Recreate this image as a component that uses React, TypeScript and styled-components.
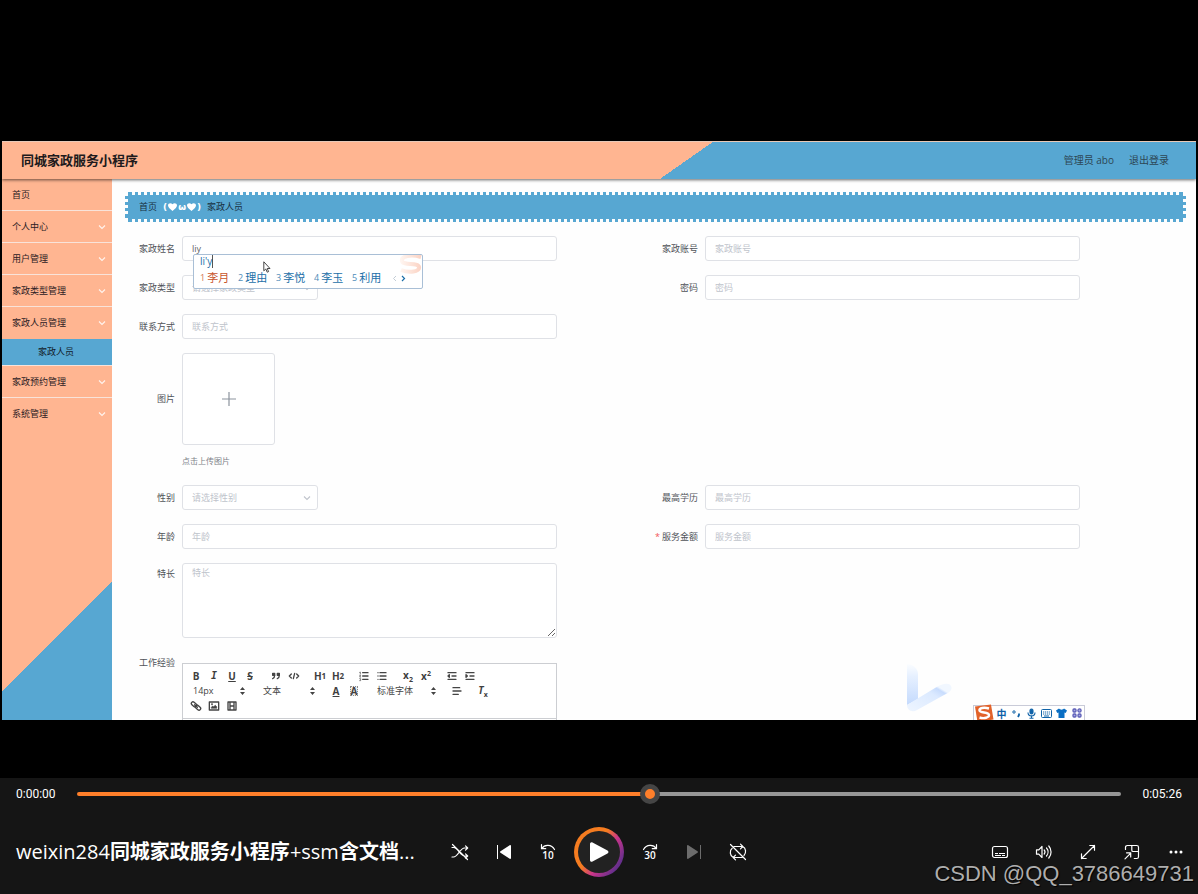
import React from "react";
import styled, { createGlobalStyle, css } from "styled-components";

const PEACH = "#ffb591";
const BLUE = "#57a7d2";
const BORDER = "#dfe1e6";
const MUTED = "#c0c4cc";

const GlobalStyle = createGlobalStyle`
  *, *::before, *::after { box-sizing: border-box; }
  body { margin: 0; background: #000; }
  body, button, input, select, textarea {
    font-family: "Open Sans", "Noto Sans CJK SC", sans-serif;
  }
  button { padding: 0; border: 0; background: none; color: inherit; cursor: pointer; }
  svg { display: block; flex: none; }
`;

/* ---------- window ---------- */

const Window = styled.div`
  position: relative;
  display: flex;
  flex-direction: column;
  height: 100vh;
  min-height: 600px;
  overflow: hidden;
  background: #000;
`;

const Stage = styled.div`
  flex: 1;
  min-height: 0;
  display: flex;
  padding: 141px 2px 58px;
`;

const Video = styled.div`
  position: relative;
  flex: 1;
  min-width: 0;
  display: flex;
  flex-direction: column;
  overflow: hidden;
  background: #fefefe;
`;

/* ---------- admin site ---------- */

const SiteHeader = styled.header`
  position: relative;
  flex: none;
  display: flex;
  align-items: center;
  justify-content: space-between;
  height: 38px;
  padding: 0 27px 2px 19px;
  border-top: 1px solid #e8c9b8;
  background: linear-gradient(145deg, ${PEACH} 57%, ${BLUE} 57%);
  box-shadow: 0 1px 3px rgba(0, 0, 0, 0.6);
`;

const SiteTitle = styled.h1`
  margin: 0;
  font-size: 13px;
  line-height: 20px;
  font-weight: 700;
  color: #201a1c;
`;

const UserNav = styled.nav`
  display: flex;
  gap: 15px;
  font-size: 10px;
  line-height: 16px;
  color: #2d4654;
`;

const NavLink = styled.a`
  color: inherit;
  text-decoration: none;
`;

const Body = styled.div`
  flex: 1;
  min-height: 0;
  display: flex;
`;

const Sidebar = styled.nav`
  flex: none;
  width: 110px;
  background: linear-gradient(135deg, ${PEACH} calc(100% - 98px), ${BLUE} calc(100% - 98px));
`;

const MenuItem = styled.a<{ $line?: boolean }>`
  display: flex;
  align-items: center;
  justify-content: space-between;
  height: 32px;
  padding: 0 6px 0 10px;
  border-bottom: 1px solid ${(p) => (p.$line ? "#f8e3da" : "transparent")};
  font-size: 9px;
  color: #2b2024;
  text-decoration: none;
`;

const SubItem = styled.a`
  display: flex;
  align-items: center;
  justify-content: center;
  height: 27px;
  padding: 0 2px 1px 0;
  border-bottom: 1px solid #f8e3da;
  background: ${BLUE};
  font-size: 9px;
  color: #12202a;
  text-decoration: none;
`;

const Main = styled.main`
  flex: 1;
  min-width: 0;
  padding: 13px 10px 0 13px;
`;

const Breadcrumb = styled.div`
  display: flex;
  align-items: center;
  gap: 6px;
  height: 30px;
  padding: 0 11px 1px;
  border: 3px dotted #fefefe;
  border-radius: 3px;
  background: ${BLUE};
  font-size: 9px;
  color: #17303f;
`;

const Face = styled.span`
  display: flex;
  align-items: center;
  gap: 1px;
  font-family: "DejaVu Sans", sans-serif;
  font-size: 9px;
  font-weight: 700;
  color: #fff;
`;

const Form = styled.form`
  display: flex;
  flex-direction: column;
  gap: 14px;
  padding: 14px 15px 0 0;
`;

const FormRow = styled.div`
  display: grid;
  grid-template-columns: 1fr 1fr;
`;

const Field = styled.div`
  display: flex;
  gap: 7px;
  padding-right: 91px;
`;

const labelCss = css<{ $height?: number }>`
  flex: none;
  width: 50px;
  font-size: 9px;
  line-height: ${(p) => p.$height ?? 25}px;
  height: ${(p) => p.$height ?? 25}px;
  text-align: right;
  white-space: nowrap;
  color: #505359;
`;

const Label = styled.label<{ $height?: number }>`
  ${labelCss}
`;

const LabelText = styled.span<{ $height?: number }>`
  ${labelCss}
`;

const Star = styled.span`
  margin-right: 2px;
  color: #f25555;
`;

const Control = styled.div`
  position: relative;
  flex: 1;
  min-width: 0;
`;

const boxCss = css`
  display: block;
  border: 1px solid ${BORDER};
  border-radius: 3px;
  background: #fff;
  font-size: 9px;
  color: #606266;
  outline: none;
  &::placeholder { color: ${MUTED}; opacity: 1; }
`;

const TextInput = styled.input`
  ${boxCss}
  width: 100%;
  height: 25px;
  padding: 0 9px;
`;

const TextArea = styled.textarea`
  ${boxCss}
  width: 100%;
  height: 75px;
  padding: 2px 9px;
  line-height: 14px;
  resize: vertical;
`;

const SelectWrap = styled.div`
  display: grid;
  grid-template-columns: 136px;
  align-items: center;
  justify-items: end;
  & > * { grid-area: 1 / 1; }
  & > svg { margin-right: 7px; pointer-events: none; }
`;

const SelectBox = styled.select`
  ${boxCss}
  appearance: none;
  width: 100%;
  height: 25px;
  padding: 0 9px;
  color: ${MUTED};
`;

const Upload = styled.button`
  display: flex;
  align-items: center;
  justify-content: center;
  width: 93px;
  height: 92px;
  border: 1px solid ${BORDER};
  border-radius: 3px;
  background: #fff;
`;

const Tip = styled.div`
  margin-top: 5px;
  font-size: 8px;
  line-height: 21px;
  color: #7d8188;
`;

/* ---------- rich text editor ---------- */

const Editor = styled.div`
  margin-top: 11px;
  border: 1px solid #ccced2;
  background: #fff;
`;

const EditorTools = styled.div`
  padding: 4px 4px 5px;
  border-bottom: 1px solid #ccced2;
`;

const ToolRow = styled.div`
  display: flex;
  align-items: center;
  gap: 8px;
  height: 15px;
`;

const ToolGroup = styled.div`
  display: flex;
`;

const Tool = styled.button<{ $italic?: boolean; $line?: "under" | "through"; $boxed?: boolean }>`
  display: flex;
  align-items: center;
  justify-content: center;
  width: 18px;
  height: 15px;
  font-size: 10px;
  line-height: 14px;
  font-weight: 700;
  color: #3f3f3f;
  font-style: ${(p) => (p.$italic ? "italic" : "normal")};
  font-family: ${(p) => (p.$italic ? '"DejaVu Sans Mono", monospace' : '"Open Sans", sans-serif')};
  text-decoration: ${(p) =>
    p.$line === "under" ? "underline" : p.$line === "through" ? "line-through" : "none"};
  & sub, & sup { font-size: 7px; line-height: 6px; }
  & small { font-size: 8px; }
  ${(p) =>
    p.$boxed &&
    css`
      & > span { padding: 0 1px; outline: 1px dotted #8a8a8a; outline-offset: -1px; line-height: 10px; background: #eee; }
    `}
`;

const Picker = styled.div<{ $width: number }>`
  display: grid;
  grid-template-columns: ${(p) => p.$width}px;
  align-items: center;
  justify-items: end;
  & > * { grid-area: 1 / 1; }
  & > svg { margin-right: 4px; pointer-events: none; }
`;

const PickerSelect = styled.select`
  appearance: none;
  width: 100%;
  height: 15px;
  padding: 0 6px;
  border: 0;
  background: none;
  font-size: 9px;
  color: #444;
`;

const EditorArea = styled.div`
  height: 120px;
`;

/* ---------- things that float over the page ---------- */

const Ime = styled.div`
  position: absolute;
  z-index: 2;
  top: 18px;
  left: 11px;
  width: 230px;
  height: 35px;
  padding: 0 6px;
  overflow: hidden;
  border: 1px solid #a9bfd6;
  border-radius: 2px;
  background: #fff;
  color: #1c6fa8;
`;

const ImeLogo = styled.svg`
  position: absolute;
  top: 0;
  right: 0;
`;

const Typed = styled.div`
  font-size: 10px;
  line-height: 13px;
`;

const Caret = styled.span`
  border-right: 1px solid #555;
`;

const Candidates = styled.div`
  display: grid;
  grid-template-columns: repeat(5, 38px) 1fr;
  align-items: center;
  font-size: 11px;
  line-height: 20px;
`;

const Candidate = styled.span<{ $first?: boolean }>`
  display: flex;
  align-items: center;
  gap: 2px;
  white-space: nowrap;
  color: ${(p) => (p.$first ? "#c8542c" : "#1c6fa8")};
`;

const Num = styled.span`
  font-size: 9px;
  opacity: 0.8;
`;

const Pager = styled.span`
  display: flex;
  gap: 4px;
  padding-left: 2px;
`;

const Pointer = styled.svg`
  position: absolute;
  z-index: 3;
  top: 25px;
  left: 81px;
`;

const Bird = styled.svg`
  position: absolute;
  right: 244px;
  bottom: 8px;
`;

const ImeBar = styled.div`
  position: absolute;
  right: 111px;
  bottom: 0;
  display: flex;
  align-items: center;
  height: 15px;
  border: 1px solid #c9cbd8;
  border-bottom: 0;
  background: #fff;
  font-size: 10px;
  font-weight: 700;
  color: #0f62a8;
`;

const ImeCell = styled.span`
  display: flex;
  align-items: center;
  justify-content: center;
  width: 15px;
  height: 14px;
`;

/* ---------- player ---------- */

const Player = styled.footer`
  flex: none;
  background: #151515;
  color: #fff;
`;

const SeekRow = styled.div`
  display: grid;
  grid-template-columns: 45px 1fr 45px;
  align-items: center;
  column-gap: 16px;
  height: 32px;
  padding: 0 16px;
  font-family: Roboto, sans-serif;
  font-size: 12px;
  line-height: 16px;
`;

const Time = styled.span<{ $end?: boolean }>`
  text-align: ${(p) => (p.$end ? "right" : "left")};
`;

const Seek = styled.input`
  appearance: none;
  width: 100%;
  height: 20px;
  margin: 0;
  background: none;
  &::-webkit-slider-runnable-track {
    height: 4px;
    border-radius: 2px;
    background: linear-gradient(to right, #ff7f2a 55%, #969696 55%);
  }
  &::-webkit-slider-thumb {
    appearance: none;
    width: 20px;
    height: 20px;
    margin-top: -8px;
    border: 5px solid #454545;
    border-radius: 50%;
    background: #ff7f2a;
  }
`;

const ControlsRow = styled.div`
  display: grid;
  grid-template-columns: minmax(0, 1fr) auto minmax(0, 1fr);
  align-items: center;
  height: 84px;
`;

const MediaTitle = styled.div`
  padding-left: 16px;
  overflow: hidden;
  font-size: 20px;
  line-height: 28px;
  font-weight: 500;
  white-space: nowrap;
`;

const Han = styled.span`
  font-weight: 700;
`;

const Buttons = styled.div<{ $end?: boolean }>`
  display: flex;
  align-items: center;
  justify-content: ${(p) => (p.$end ? "flex-end" : "center")};
`;

const IconButton = styled.button`
  display: flex;
  align-items: center;
  justify-content: center;
  width: 44px;
  height: 44px;
  color: #fff;
  &:disabled { color: #6c6c6c; }
`;

const PlayButton = styled.button`
  display: flex;
  align-items: center;
  justify-content: center;
  width: 50px;
  height: 50px;
  margin: 0 4px;
  border: 4px solid transparent;
  border-radius: 50%;
  background:
    linear-gradient(#222, #222) padding-box,
    linear-gradient(125deg, #f57c20 42%, #c9358a 60%, #662f8c 84%) border-box;
`;

const Watermark = styled.div`
  position: absolute;
  right: 4px;
  bottom: 7px;
  font-family: "Liberation Sans", sans-serif;
  font-size: 22px;
  line-height: 26px;
  color: #aeaeae;
  text-shadow: 1px 1px 1px #000;
  pointer-events: none;
`;

/* ---------- small drawings ---------- */

const Chevron = ({ color = MUTED }: { color?: string }) => (
  <svg width="8" height="6" viewBox="0 0 8 6" fill="none" stroke={color} strokeWidth="1.100">
    <path d="M1 1.5l3 3 3-3" />
  </svg>
);

const Heart = () => (
  <svg width="9" height="8" viewBox="0 0 9 8" fill="#fff">
    <path d="M4.500 8C1.500 5.500 0 4.200 0 2.300 0 .2 3 -.8 4.500 1.300 6 -.8 9 .2 9 2.300 9 4.200 7.500 5.500 4.500 8z" />
  </svg>
);

const UpDown = () => (
  <svg width="5" height="8" viewBox="0 0 5 8" fill="#444">
    <path d="M2.500 0L5 3H0zM2.500 8L0 5h5z" />
  </svg>
);

const Glyph = ({ children }: { children: React.ReactNode }) => (
  <svg width="12" height="12" viewBox="0 0 18 18" fill="none" stroke="#444" strokeWidth="2" strokeLinecap="round" strokeLinejoin="round">
    {children}
  </svg>
);

const Line16 = ({ children }: { children: React.ReactNode }) => (
  <svg width="18" height="18" viewBox="0 0 18 18" fill="none" stroke="currentColor" strokeWidth="1.2" strokeLinecap="round" strokeLinejoin="round">
    {children}
  </svg>
);

/* ---------- parts ---------- */

type TextFieldProps = { id: string; label: string; required?: boolean; value?: string; children?: React.ReactNode };

const TextField = ({ id, label, required, value, children }: TextFieldProps) => (
  <Field>
    <Label htmlFor={id}>
      {required && <Star>*</Star>}
      {label}
    </Label>
    <Control>
      <TextInput id={id} placeholder={label} defaultValue={value} />
      {children}
    </Control>
  </Field>
);

const SelectField = ({ id, label }: { id: string; label: string }) => (
  <Field>
    <Label htmlFor={id}>{label}</Label>
    <Control>
      <SelectWrap>
        <SelectBox id={id}>
          <option>{`请选择${label}`}</option>
        </SelectBox>
        <Chevron />
      </SelectWrap>
    </Control>
  </Field>
);

const words = ["李月", "理由", "李悦", "李玉", "利用"];

const ImePopup = () => (
  <Ime>
    <ImeLogo width="24" height="20" viewBox="0 0 24 20" fill="none" strokeWidth="4">
      <defs>
        <linearGradient id="fade" x1="0" y1="0" x2="1" y2="0">
          <stop offset="0" stopColor="#fff5f0" />
          <stop offset="1" stopColor="#fbd3c4" />
        </linearGradient>
      </defs>
      <path d="M23 2C13-1 3 1 4 6s16 1 17 6-10 6-18 3" stroke="url(#fade)" />
    </ImeLogo>
    <Typed>
      <Caret>li'y</Caret>
    </Typed>
    <Candidates>
      {words.map((w, i) => (
        <Candidate key={w} $first={i === 0}>
          <Num>{i + 1}</Num>
          {w}
        </Candidate>
      ))}
      <Pager>
        <svg width="5" height="7" viewBox="0 0 5 7" fill="none" stroke="#c3cdd6" strokeWidth="1">
          <path d="M4 1L1.500 3.500 4 6" />
        </svg>
        <svg width="5" height="7" viewBox="0 0 5 7" fill="none" stroke="#1c6fa8" strokeWidth="1.200">
          <path d="M1 1l2.500 2.500L1 6" />
        </svg>
      </Pager>
    </Candidates>
  </Ime>
);

const RichEditor = () => (
  <Editor>
    <EditorTools>
      <ToolRow>
        <ToolGroup>
          <Tool type="button">B</Tool>
          <Tool type="button" $italic>I</Tool>
          <Tool type="button" $line="under">U</Tool>
          <Tool type="button" $line="through">S</Tool>
        </ToolGroup>
        <ToolGroup>
          <Tool type="button" aria-label="引用">
            <Glyph>
              <rect x="4" y="5" width="3" height="3" fill="#444" />
              <rect x="11" y="5" width="3" height="3" fill="#444" />
              <path d="M7 8c0 4-3 5-3 5M14 8c0 4-3 5-3 5" />
            </Glyph>
          </Tool>
          <Tool type="button" aria-label="代码">
            <Glyph><path d="M5 6L2 9l3 3M13 6l3 3-3 3M10 5L8 13" /></Glyph>
          </Tool>
        </ToolGroup>
        <ToolGroup>
          <Tool type="button">H<small>1</small></Tool>
          <Tool type="button">H<small>2</small></Tool>
        </ToolGroup>
        <ToolGroup>
          <Tool type="button" aria-label="有序列表">
            <Glyph>
              <path d="M7 4h8M7 9h8M7 14h8" />
              <path d="M2.500 3.500l1-.5v3M2.500 8h1.500l-1.500 2.500h1.500M2.500 13h1.500v3h-1.500" strokeWidth="1" />
            </Glyph>
          </Tool>
          <Tool type="button" aria-label="无序列表">
            <Glyph><path d="M6 4h9M6 9h9M6 14h9M3 4h0M3 9h0M3 14h0" /></Glyph>
          </Tool>
        </ToolGroup>
        <ToolGroup>
          <Tool type="button"><span>x<sub>2</sub></span></Tool>
          <Tool type="button"><span>x<sup>2</sup></span></Tool>
        </ToolGroup>
        <ToolGroup>
          <Tool type="button" aria-label="减少缩进">
            <Glyph><path d="M3 4h12M3 14h12M9 9h6" /><path d="M5 7v4L3 9z" fill="#444" /></Glyph>
          </Tool>
          <Tool type="button" aria-label="增加缩进">
            <Glyph><path d="M3 4h12M3 14h12M9 9h6" /><path d="M3 7v4l2-2z" fill="#444" /></Glyph>
          </Tool>
        </ToolGroup>
      </ToolRow>
      <ToolRow>
        <Picker $width={62}>
          <PickerSelect aria-label="字号"><option>14px</option></PickerSelect>
          <UpDown />
        </Picker>
        <Picker $width={62}>
          <PickerSelect aria-label="段落"><option>文本</option></PickerSelect>
          <UpDown />
        </Picker>
        <ToolGroup>
          <Tool type="button" $line="under">A</Tool>
          <Tool type="button" $boxed><span>A</span></Tool>
        </ToolGroup>
        <Picker $width={69}>
          <PickerSelect aria-label="字体"><option>标准字体</option></PickerSelect>
          <UpDown />
        </Picker>
        <ToolGroup>
          <Tool type="button" aria-label="对齐">
            <Glyph><path d="M3 4h10M3 9h12M3 14h8" /></Glyph>
          </Tool>
        </ToolGroup>
        <ToolGroup>
          <Tool type="button"><span><i>T</i><sub>x</sub></span></Tool>
        </ToolGroup>
      </ToolRow>
      <ToolRow>
        <ToolGroup>
          <Tool type="button" aria-label="链接">
            <Glyph>
              <rect x="1.500" y="4" width="9" height="5" rx="2.500" transform="rotate(42 6 6.500)" />
              <rect x="7.500" y="9" width="9" height="5" rx="2.500" transform="rotate(42 12 11.500)" />
              <path d="M7 7l4 4" />
            </Glyph>
          </Tool>
          <Tool type="button" aria-label="图片">
            <Glyph>
              <rect x="2" y="3" width="14" height="12" />
              <path d="M5 12V11l2-2 1.500 1L11 8l2 2v2z" fill="#444" strokeWidth="1" />
              <circle cx="6" cy="6.500" r="0.500" />
            </Glyph>
          </Tool>
          <Tool type="button" aria-label="视频">
            <Glyph><path d="M3 3h12v12H3zM6 3v12M12 3v12M6 9h6" /></Glyph>
          </Tool>
        </ToolGroup>
      </ToolRow>
    </EditorTools>
    <EditorArea />
  </Editor>
);

const menu = ["个人中心", "用户管理", "家政类型管理"];

export default function App() {
  return (
    <Window>
      <GlobalStyle />
      <Stage>
        <Video>
          <SiteHeader>
            <SiteTitle>同城家政服务小程序</SiteTitle>
            <UserNav>
              <span>管理员 abo</span>
              <NavLink href="#">退出登录</NavLink>
            </UserNav>
          </SiteHeader>
          <Body>
            <Sidebar>
              <MenuItem href="#" $line>首页</MenuItem>
              {menu.map((m) => (
                <MenuItem key={m} href="#" $line>
                  {m}
                  <Chevron color="#fff4ee" />
                </MenuItem>
              ))}
              <MenuItem href="#">
                家政人员管理
                <Chevron color="#fff4ee" />
              </MenuItem>
              <SubItem href="#">家政人员</SubItem>
              <MenuItem href="#" $line>
                家政预约管理
                <Chevron color="#fff4ee" />
              </MenuItem>
              <MenuItem href="#">
                系统管理
                <Chevron color="#fff4ee" />
              </MenuItem>
            </Sidebar>
            <Main>
              <Breadcrumb>
                <span>首页</span>
                <Face>
                  (<Heart />
                  ω
                  <Heart />)
                </Face>
                <span>家政人员</span>
              </Breadcrumb>
              <Form>
                <FormRow>
                  <TextField id="name" label="家政姓名" value="liy">
                    <ImePopup />
                    <Pointer width="8" height="12" viewBox="0 0 8 12" fill="#fff" stroke="#333" strokeWidth="0.900">
                      <path d="M.8.8v9l2-1.800 1.400 3.200 1.400-.6-1.400-3.100h2.800z" />
                    </Pointer>
                  </TextField>
                  <TextField id="account" label="家政账号" />
                </FormRow>
                <FormRow>
                  <SelectField id="type" label="家政类型" />
                  <TextField id="password" label="密码" />
                </FormRow>
                <FormRow>
                  <TextField id="contact" label="联系方式" />
                </FormRow>
                <FormRow>
                  <Field>
                    <LabelText $height={92}>图片</LabelText>
                    <Control>
                      <Upload type="button" aria-label="上传图片">
                        <svg width="16" height="16" viewBox="0 0 16 16" stroke="#8c939d" strokeWidth="1.200"><path d="M8 1v14M1 8h14" /></svg>
                      </Upload>
                      <Tip>点击上传图片</Tip>
                    </Control>
                  </Field>
                </FormRow>
                <FormRow>
                  <SelectField id="gender" label="性别" />
                  <TextField id="education" label="最高学历" />
                </FormRow>
                <FormRow>
                  <TextField id="age" label="年龄" />
                  <TextField id="price" label="服务金额" required />
                </FormRow>
                <FormRow>
                  <Field>
                    <Label htmlFor="skill" $height={21}>特长</Label>
                    <Control>
                      <TextArea id="skill" placeholder="特长" />
                    </Control>
                  </Field>
                </FormRow>
                <FormRow>
                  <Field>
                    <LabelText $height={21}>工作经验</LabelText>
                    <Control>
                      <RichEditor />
                    </Control>
                  </Field>
                </FormRow>
              </Form>
            </Main>
          </Body>

          <Bird width="46" height="50" viewBox="0 0 46 50">
            <defs>
              <linearGradient id="wing" x1="0" y1="0" x2="0" y2="1">
                <stop offset="0" stopColor="#fbfdff" />
                <stop offset="0.3" stopColor="#e6f0ff" />
                <stop offset="1" stopColor="#c4dafd" />
              </linearGradient>
              <linearGradient id="tail" x1="0" y1="1" x2="1" y2="0">
                <stop offset="0" stopColor="#eef5ff" />
                <stop offset="0.6" stopColor="#dceaff" />
                <stop offset="0.75" stopColor="#c8dcfd" />
                <stop offset="0.8" stopColor="#f1f7ff" />
              </linearGradient>
            </defs>
            <path d="M1 2c5 0 11 4 11 10v25L1 43z" fill="url(#wing)" />
            <path d="M1 43l28-17c6-4 14-6 16-2s-2 7-7 9L11 48c-5 3-10 0-10-5z" fill="url(#tail)" />
          </Bird>

          <ImeBar>
            <svg width="20" height="18" viewBox="0 0 20 18">
              <path d="M1 2.500L17 .5l2.500 15-16 2.500z" fill="#e2622a" />
              <path d="M15 4.500C10 3 5 4 5.500 6.500s9 1.500 9.500 4.300-5 4.200-9.500 2.700" fill="none" stroke="#fff" strokeWidth="2.400" />
            </svg>
            <ImeCell>中</ImeCell>
            <ImeCell>
              <svg width="9" height="9" viewBox="0 0 9 9" fill="none" stroke="#0f62a8">
                <circle cx="2" cy="3" r="1.200" />
                <path d="M7 4.500v1.500l-1 2" strokeWidth="1.800" />
              </svg>
            </ImeCell>
            <ImeCell>
              <svg width="9" height="11" viewBox="0 0 9 11" fill="none" stroke="#0f62a8" strokeWidth="1.100">
                <rect x="3" y="1" width="3" height="5" rx="1.500" fill="#0f62a8" />
                <path d="M1 4.500c0 4.500 7 4.500 7 0M4.500 8v2M2.500 10.200h4" />
              </svg>
            </ImeCell>
            <ImeCell>
              <svg width="11" height="9" viewBox="0 0 11 9" fill="none" stroke="#0f62a8">
                <rect x="0.500" y="0.500" width="10" height="8" rx="1" />
                <path d="M2 3h7M2 5h7" strokeDasharray="1.200 0.700" />
                <path d="M3 7h5" />
              </svg>
            </ImeCell>
            <ImeCell>
              <svg width="11" height="10" viewBox="0 0 11 10" fill="#0a6fc4">
                <path d="M3 .5c1 1.500 4 1.500 5 0l3 2-1.300 2.500L8.500 4.500V10h-6V4.500L1.300 5 0 2.500z" />
              </svg>
            </ImeCell>
            <ImeCell>
              <svg width="10" height="10" viewBox="0 0 10 10" fill="#a9abe0" stroke="#5d5fb8" strokeWidth="1.300">
                <rect x="1" y="1" width="3" height="3" rx="1" />
                <circle cx="7.500" cy="2.500" r="1.600" />
                <rect x="1" y="6" width="3" height="3" rx="1" />
                <rect x="6" y="6" width="3" height="3" rx="1" />
              </svg>
            </ImeCell>
          </ImeBar>
        </Video>
      </Stage>

      <Player>
        <SeekRow>
          <Time>0:00:00</Time>
          <Seek type="range" min={0} max={100} defaultValue={55} aria-label="进度" />
          <Time $end>0:05:26</Time>
        </SeekRow>
        <ControlsRow>
          <MediaTitle>weixin284<Han>同城家政服务小程序</Han>+ssm<Han>含文档</Han>...</MediaTitle>
          <Buttons>
            <IconButton aria-label="随机播放">
              <Line16>
                <path d="M1 4.500h1.500C7 4.500 9 13 13.500 13H16.500M1 14h1.500C7 14 9 5 13.500 5H16.500M14.500 2.800L16.700 5l-2.200 2.200M14.500 10.800l2.200 2.200-2.200 2.200M1.500 1.500l15 15" />
              </Line16>
            </IconButton>
            <IconButton aria-label="上一个">
              <svg width="14" height="14" viewBox="0 0 14 14" fill="currentColor">
                <path d="M0 0h1v14H0zM12.700.2C13.400-.2 14 .2 14 1v12c0 .8-.6 1.200-1.300.8L3.500 7.800c-.6-.4-.6-1.200 0-1.600z" />
              </svg>
            </IconButton>
            <IconButton aria-label="后退 10 秒">
              <svg width="16" height="18" viewBox="0 0 16 18" fill="none" stroke="currentColor" strokeWidth="1.200" strokeLinecap="round">
                <path d="M1.500 1.500v4.200h4.200M1.800 5.500C4.500 1.200 11.500 1.200 14.500 6.500" />
                <text x="8" y="16" textAnchor="middle" fontSize="10" fontWeight="600" fill="currentColor" stroke="none">10</text>
              </svg>
            </IconButton>
            <PlayButton aria-label="播放">
              <svg width="20" height="20" viewBox="0 0 20 20" fill="#fff">
                <path d="M1 2C1 .5 2.200-.3 3.500.4l15 8.100c1.300.7 1.300 2.300 0 3l-15 8.100C2.200 20.300 1 19.500 1 18z" />
              </svg>
            </PlayButton>
            <IconButton aria-label="前进 30 秒">
              <svg width="16" height="18" viewBox="0 0 16 18" fill="none" stroke="currentColor" strokeWidth="1.200" strokeLinecap="round">
                <path d="M14.500 1.500v4.200h-4.200M14.200 5.500C11.500 1.200 4.500 1.200 1.500 6.500" />
                <text x="8" y="16" textAnchor="middle" fontSize="10" fontWeight="600" fill="currentColor" stroke="none">30</text>
              </svg>
            </IconButton>
            <IconButton aria-label="下一个" disabled>
              <svg width="14" height="14" viewBox="0 0 14 14" fill="currentColor">
                <path d="M13 0h1v14h-1zM1.300.2C.6-.2 0 .2 0 1v12c0 .8.6 1.200 1.300.8l9.200-6c.6-.4.6-1.200 0-1.600z" />
              </svg>
            </IconButton>
            <IconButton aria-label="循环">
              <Line16>
                <path d="M5 3.500h8.500M11.500 1.200L13.800 3.500l-2.300 2.300M13.800 3.500C17 5 17.500 10 15 12.500M13 14.500H4.500M6.500 12.200L4.200 14.500l2.300 2.300M4.200 14.500C.8 13 .3 7.500 3.200 5.300M1.500 1.500l15 15" />
              </Line16>
            </IconButton>
          </Buttons>
          <Buttons $end>
            <IconButton aria-label="字幕">
              <Line16>
                <rect x="1.500" y="3.500" width="15" height="11" rx="2" />
                <path d="M4 10.500h3M8 10.500h6M4 12.500h6M11 12.500h3" strokeWidth="1" strokeLinecap="butt" />
              </Line16>
            </IconButton>
            <IconButton aria-label="音量">
              <Line16>
                <path d="M1.500 6.800h2.300L7 3.500v11l-3.200-3.300H1.500zM9.200 7c1 1.200 1 2.800 0 4M11.500 5c2 2.300 2 5.700 0 8M13.800 3c3 3.500 3 8.500 0 12" />
              </Line16>
            </IconButton>
            <IconButton aria-label="全屏">
              <Line16>
                <path d="M2.500 15.500l13-13M10.800 2.500h4.700v4.700M2.500 10.800v4.700h4.700" />
              </Line16>
            </IconButton>
            <IconButton aria-label="迷你播放器">
              <Line16>
                <path d="M2.500 6.500V4.300c0-1.200.8-1.800 1.800-1.800h9.400c1.100 0 1.800.7 1.800 1.800v9.400c0 1.100-.7 1.800-1.800 1.800h-2.400M8.800 2.500v4.700c0 .8.500 1.300 1.300 1.300h5.400M2 15.800l5.500-5.500M3.500 9.800h4.200V14" />
              </Line16>
            </IconButton>
            <IconButton aria-label="更多">
              <svg width="14" height="4" viewBox="0 0 14 4" fill="currentColor">
                <circle cx="2" cy="2" r="1.500" /><circle cx="7" cy="2" r="1.500" /><circle cx="12" cy="2" r="1.500" />
              </svg>
            </IconButton>
          </Buttons>
        </ControlsRow>
      </Player>
      <Watermark>CSDN @QQ_3786649731</Watermark>
    </Window>
  );
}
